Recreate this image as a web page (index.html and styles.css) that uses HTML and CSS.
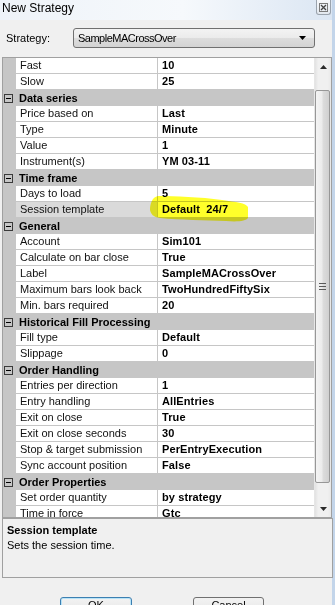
FILE: index.html
```html
<!DOCTYPE html>
<html>
<head>
<meta charset="utf-8">
<title>New Strategy</title>
<link rel="stylesheet" href="styles.css">
</head>
<body>
<div class="window">
  <div class="titlebar">
    <span class="title">New Strategy</span>
    <span class="close">
      <svg width="9" height="9" viewBox="0 0 9 9"><rect x="0.5" y="0.5" width="8" height="8" fill="none" stroke="#7a7a7a"/><path d="M2 2 L7 7 M7 2 L2 7" stroke="#444" stroke-width="1.3"/></svg>
    </span>
  </div>
  <div class="body">
    <div class="strategy-row">
      <span class="label">Strategy:</span>
      <div class="combo">
        <span class="combo-text">SampleMACrossOver</span>
        <svg class="combo-arrow" width="7" height="4" viewBox="0 0 7 4"><path d="M0 0 H7 L3.5 4 Z" fill="#000"/></svg>
      </div>
    </div>

    <div class="grid">
      <div class="rows">
        <div class="row"><span class="gut"></span><span class="name">Fast</span><span class="val">10</span></div>
        <div class="row"><span class="gut"></span><span class="name">Slow</span><span class="val">25</span></div>
        <div class="cat"><span class="box"></span><span class="cat-text">Data series</span></div>
        <div class="row"><span class="gut"></span><span class="name">Price based on</span><span class="val">Last</span></div>
        <div class="row"><span class="gut"></span><span class="name">Type</span><span class="val">Minute</span></div>
        <div class="row"><span class="gut"></span><span class="name">Value</span><span class="val">1</span></div>
        <div class="row"><span class="gut"></span><span class="name">Instrument(s)</span><span class="val">YM 03-11</span></div>
        <div class="cat"><span class="box"></span><span class="cat-text">Time frame</span></div>
        <div class="row"><span class="gut"></span><span class="name">Days to load</span><span class="val">5</span></div>
        <div class="row selected"><span class="gut"></span><span class="name">Session template</span><span class="val">Default&nbsp; 24/7</span></div>
        <div class="cat"><span class="box"></span><span class="cat-text">General</span></div>
        <div class="row"><span class="gut"></span><span class="name">Account</span><span class="val">Sim101</span></div>
        <div class="row"><span class="gut"></span><span class="name">Calculate on bar close</span><span class="val">True</span></div>
        <div class="row"><span class="gut"></span><span class="name">Label</span><span class="val">SampleMACrossOver</span></div>
        <div class="row"><span class="gut"></span><span class="name">Maximum bars look back</span><span class="val">TwoHundredFiftySix</span></div>
        <div class="row"><span class="gut"></span><span class="name">Min. bars required</span><span class="val">20</span></div>
        <div class="cat"><span class="box"></span><span class="cat-text">Historical Fill Processing</span></div>
        <div class="row"><span class="gut"></span><span class="name">Fill type</span><span class="val">Default</span></div>
        <div class="row"><span class="gut"></span><span class="name">Slippage</span><span class="val">0</span></div>
        <div class="cat"><span class="box"></span><span class="cat-text">Order Handling</span></div>
        <div class="row"><span class="gut"></span><span class="name">Entries per direction</span><span class="val">1</span></div>
        <div class="row"><span class="gut"></span><span class="name">Entry handling</span><span class="val">AllEntries</span></div>
        <div class="row"><span class="gut"></span><span class="name">Exit on close</span><span class="val">True</span></div>
        <div class="row"><span class="gut"></span><span class="name">Exit on close seconds</span><span class="val">30</span></div>
        <div class="row"><span class="gut"></span><span class="name">Stop &amp; target submission</span><span class="val">PerEntryExecution</span></div>
        <div class="row"><span class="gut"></span><span class="name">Sync account position</span><span class="val">False</span></div>
        <div class="cat"><span class="box"></span><span class="cat-text">Order Properties</span></div>
        <div class="row"><span class="gut"></span><span class="name">Set order quantity</span><span class="val">by strategy</span></div>
        <div class="row"><span class="gut"></span><span class="name">Time in force</span><span class="val">Gtc</span></div>
      </div>
      <div class="scrollbar">
        <div class="sb-btn">
          <svg width="7" height="4" viewBox="0 0 7 4"><path d="M0 4 H7 L3.5 0 Z" fill="#2a2a2a"/></svg>
        </div>
        <div class="sb-track">
          <div class="thumb">
            <svg width="7" height="7" viewBox="0 0 7 7"><path d="M0 0.5 H7 M0 3.5 H7 M0 6.5 H7" stroke="#5a5a5a" stroke-width="1"/></svg>
          </div>
        </div>
        <div class="sb-btn">
          <svg width="7" height="4" viewBox="0 0 7 4"><path d="M0 0 H7 L3.5 4 Z" fill="#2a2a2a"/></svg>
        </div>
      </div>
    </div>

    <div class="desc">
      <div class="desc-title">Session template</div>
      <div class="desc-text">Sets the session time.</div>
    </div>

    <div class="buttons">
      <div class="btn default">OK</div>
      <div class="btn cancel">Cancel</div>
    </div>
  </div>
</div>
<svg class="highlight" width="335" height="605" viewBox="0 0 335 605">
  <path d="M158 196 C175 196 200 197 222 200 C236 202 246 203 248 207 L248 218 C246 221 238 222 226 221 C205 220 180 220 160 218 C153 217 151 214 150 210 C150 204 152 197 158 196 Z" fill="#ffff2a"/>
</svg>
</body>
</html>
```

FILE: styles.css
```css
* {
  box-sizing: border-box;
}

html, body {
  margin: 0;
  padding: 0;
}

body {
  width: 335px;
  height: 605px;
  overflow: hidden;
  background: #f0f0f0;
  font-family: "Liberation Sans", Arial, sans-serif;
  font-size: 11px;
  color: #000;
}

.window {
  width: 335px;
  height: 605px;
  border-right: 3px solid #c3d5ea;
  display: flex;
  flex-direction: column;
}

.titlebar {
  height: 20px;
  flex: none;
  display: flex;
  align-items: flex-start;
  background: linear-gradient(90deg, #eef3f9 0%, #f6f9fc 55%, #dbe6f3 100%);
}

.title {
  font-size: 12px;
  line-height: 16px;
  padding-left: 2px;
}

.close {
  margin-left: auto;
  margin-right: 1px;
  width: 15px;
  height: 15px;
  border: 1px solid #9aa3ad;
  border-top: none;
  border-radius: 0 0 3px 3px;
  background: linear-gradient(#f6f8fb, #e2e8ef);
  display: flex;
  align-items: center;
  justify-content: center;
}

.body {
  flex: 1;
  display: flex;
  flex-direction: column;
  padding-left: 2px;
  background: #f0f0f0;
}

.strategy-row {
  display: flex;
  align-items: center;
  margin-top: 8px;
  height: 20px;
}

.label {
  width: 71px;
  padding-left: 4px;
}

.combo {
  width: 242px;
  height: 20px;
  border: 1px solid #707070;
  border-radius: 3px;
  background: linear-gradient(#f3f3f3 0%, #ebebeb 50%, #dddddd 50%, #d3d3d3 100%);
  display: flex;
  align-items: center;
  padding-left: 4px;
  padding-right: 8px;
}

.combo-text {
  flex: 1;
  letter-spacing: -0.5px;
}

.grid {
  margin-top: 9px;
  width: 330px;
  height: 461px;
  border: 1px solid #a0a0a0;
  display: flex;
  background: #fff;
}

.rows {
  width: 311px;
  overflow: hidden;
  display: flex;
  flex-direction: column;
}

.row {
  display: flex;
  height: 16px;
  flex: none;
}

.gut {
  width: 13px;
  flex: none;
  background: #c6c6c6;
}

.name {
  width: 142px;
  flex: none;
  padding-left: 4px;
  line-height: 15px;
  border-right: 1px solid #c6c6c6;
  border-bottom: 1px solid #c6c6c6;
  white-space: nowrap;
  overflow: hidden;
  color: #111;
}

.val {
  flex: 1;
  padding-left: 4px;
  line-height: 15px;
  font-weight: bold;
  border-bottom: 1px solid #c6c6c6;
  white-space: nowrap;
  letter-spacing: 0.1px;
}

.selected .name {
  background: #dadada;
}

.cat {
  display: flex;
  align-items: center;
  height: 16px;
  flex: none;
  background: #c6c6c6;
}

.box {
  width: 9px;
  height: 9px;
  margin-left: 1px;
  margin-right: 6px;
  border: 1px solid #3a3a3a;
  position: relative;
  flex: none;
}

.box::after {
  content: "";
  position: absolute;
  left: 1px;
  top: 3px;
  width: 5px;
  height: 1px;
  background: #000;
}

.cat-text {
  font-weight: bold;
  line-height: 15px;
}

.scrollbar {
  width: 17px;
  display: flex;
  flex-direction: column;
  background: linear-gradient(90deg, #e2e2e2 0%, #f0f0f0 20%, #f0f0f0 80%, #e8e8e8 100%);
  border-left: 1px solid #e6e6e6;
}

.sb-btn {
  height: 17px;
  flex: none;
  display: flex;
  align-items: center;
  justify-content: center;
}

.sb-track {
  flex: 1;
  display: flex;
  flex-direction: column;
  padding-top: 15px;
}

.thumb {
  margin: 0 1px 0 0;
  height: 393px;
  border: 1px solid #979797;
  border-radius: 2px;
  background: linear-gradient(90deg, #f4f4f4 0%, #ececec 45%, #dcdcdc 55%, #d0d0d0 100%);
  display: flex;
  align-items: center;
  justify-content: center;
}

.desc {
  width: 331px;
  height: 60px;
  border: 1px solid #a0a0a0;
  padding: 4px 0 0 4px;
  background: #f0f0f0;
}

.desc-title {
  font-weight: bold;
  line-height: 15px;
}

.desc-text {
  line-height: 15px;
}

.buttons {
  display: flex;
  margin-top: 19px;
  padding-left: 58px;
  gap: 61px;
}

.btn {
  width: 72px;
  height: 23px;
  flex: none;
  border: 1px solid #707070;
  border-radius: 3px;
  background: linear-gradient(#f2f2f2 0%, #ebebeb 50%, #dddddd 50%, #cfcfcf 100%);
  text-align: center;
  line-height: 13px;
  padding-top: 1px;
}

.btn.default {
  border-color: #3c7fb1;
  box-shadow: inset 0 0 0 1px #b8e3f7;
}

.btn.cancel {
  width: 71px;
}

.highlight {
  position: absolute;
  left: 0;
  top: 0;
  pointer-events: none;
  mix-blend-mode: multiply;
}
```
